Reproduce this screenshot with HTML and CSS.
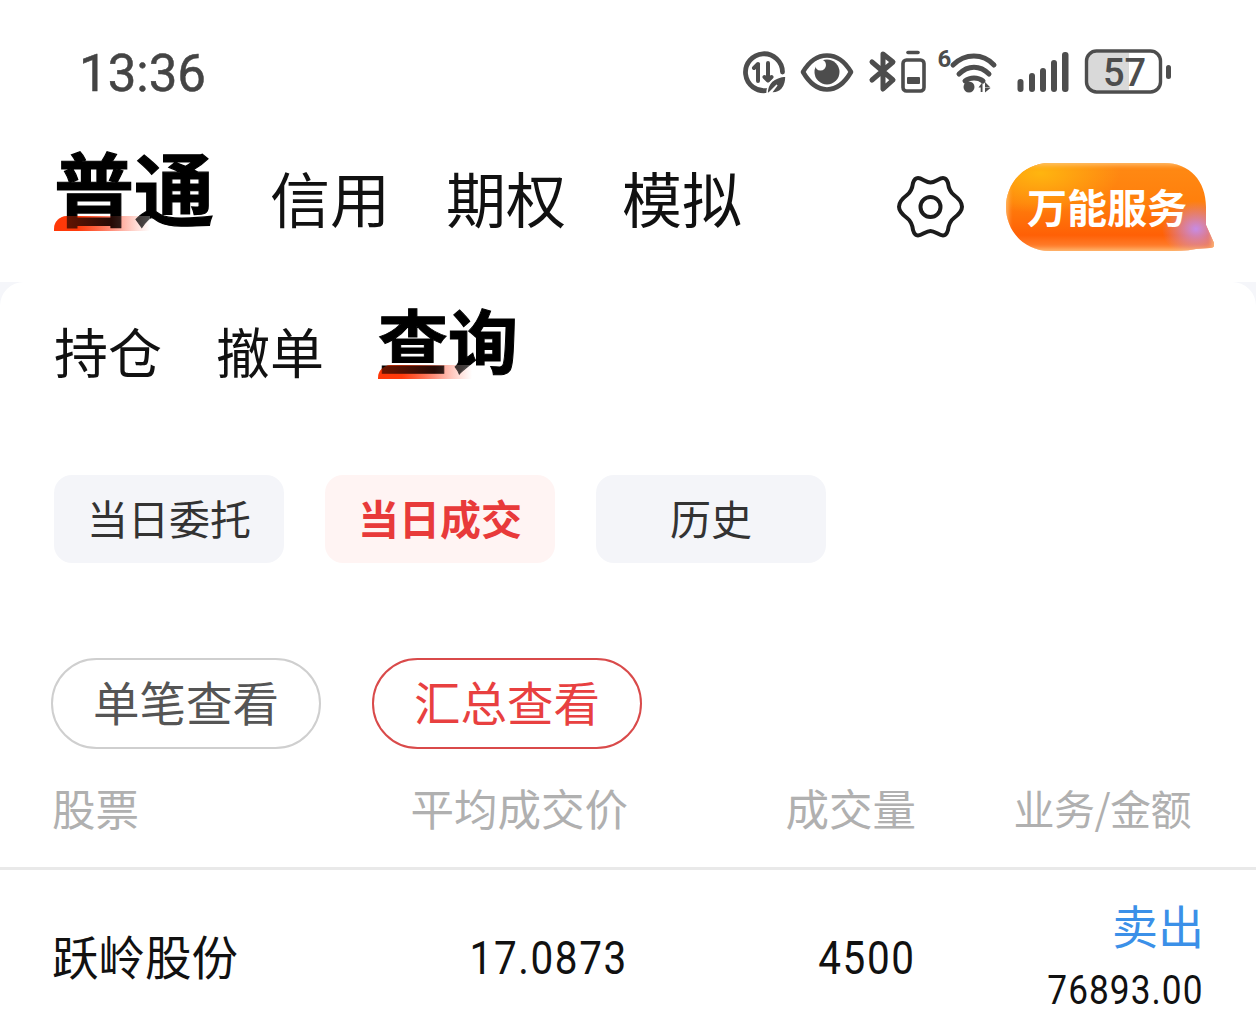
FILE: index.html
```html
<!DOCTYPE html>
<html lang="zh-CN">
<head>
<meta charset="utf-8">
<title>交易</title>
<link rel="stylesheet" href="styles.css">
</head>
<body>
<header class="top">
  <div class="status">
    <span class="time">13:36</span>
    <svg class="status-icons" viewBox="743 39 430 56" width="430" height="56">
      <g fill="none" stroke="#4d4d4d" stroke-width="4.800" stroke-linecap="round" stroke-linejoin="round">
        <path d="M768 90.500A18.500 18.500 0 1 1 783.500 72"/>
        <path d="M759 64v17M755 68l4-4M769 63v17.500M765.500 77l3.500 3.500 3.500-3.500" stroke-width="4"/>
        <path d="M804 72C811 60 819 55.500 828 55.500S845 60 852 72C845 84 837 89.500 828 89.500S811 84 804 72Z" stroke-width="4.600"/>
        <path d="M873 62L894 80L884 89V54L894 62L873 80" stroke-width="5"/>
        <rect x="904" y="60" width="21" height="31" rx="3.500" stroke-width="3.600"/>
        <path d="M909 52.500h10" stroke-width="3.600"/>
        <path d="M954 65C966 53 984 53 995 65M960 74C969 65 981 65 990 74M966 81C971 77 979 77 984 81" stroke-width="5"/>
      </g>
      <path d="M768 94c0-11 7-17 19-18 0 12-6 18-15 17l6-8-8 8z" fill="#4d4d4d" stroke="#fff" stroke-width="1.500"/>
      <g fill="#4d4d4d">
        <circle cx="828" cy="72" r="12.500"/>
        <rect x="908" y="77" width="13" height="7" rx="1"/>
        <circle cx="970" cy="87" r="5.500"/>
        <path d="M979.500 87.500l4-5.500v10h-1.800v-4.500zM986 82l5.500 5.500-5.500 0zM986 88h2.500l3 0-5.500 4.500z"/>
        <rect x="1018.500" y="79" width="6" height="13" rx="3"/>
        <rect x="1030" y="73" width="6" height="19" rx="3"/>
        <rect x="1041" y="68" width="6" height="24" rx="3"/>
        <rect x="1052" y="60" width="6" height="32" rx="3"/>
        <rect x="1063" y="52" width="6.500" height="40" rx="3"/>
        <rect x="1167" y="65" width="5" height="14" rx="2.500"/>
        <text class="mini" x="938.500" y="67">6</text>
      </g>
      <circle cx="821.500" cy="65" r="5.500" fill="#fff"/>
      <path d="M1092 53h38v37h-38a3 3 0 0 1-3-3V56a3 3 0 0 1 3-3z" fill="#d9d9d9"/>
      <rect x="1087.500" y="51" width="74" height="41" rx="10" fill="none" stroke="#4d4d4d" stroke-width="3.400"/>
      <text class="batt" x="1104" y="86">57</text>
    </svg>
  </div>
  <nav class="main-tabs">
    <a class="main-tab active">普通</a>
    <a class="main-tab">信用</a>
    <a class="main-tab">期权</a>
    <a class="main-tab">模拟</a>
    <svg class="gear" viewBox="0 0 70 64" width="70" height="64">
      <path d="M34.500 7.500C39 7.500 43 3 47 3C50 3 51 5 52 8C52.500 12 54 17 58 20C62 23 66 27 66 31.700C66 36 62 40 58 43C54 46 52.500 51 52 55C51 58.500 50 60.500 47 60.500C43 60.500 39 56 34.500 56C30 56 26 60.500 22 60.500C19 60.500 18 58.500 17 55C16.500 51 15 46 11 43C7 40 3 36 3 31.700C3 27 7 23 11 20C15 17 16.500 12 17 8C18 5 19 3 22 3C26 3 30 7.500 34.500 7.500Z" fill="none" stroke="#1c1c1c" stroke-width="4"/>
      <circle cx="34.500" cy="32" r="10" fill="none" stroke="#1c1c1c" stroke-width="4"/>
    </svg>
    <a class="service"><span>万能服务</span></a>
  </nav>
</header>
<main class="card">
  <nav class="sub-tabs">
    <a class="sub-tab">持仓</a>
    <a class="sub-tab">撤单</a>
    <a class="sub-tab active">查询</a>
  </nav>
  <div class="chips">
    <a class="chip">当日委托</a>
    <a class="chip active">当日成交</a>
    <a class="chip">历史</a>
  </div>
  <div class="pills">
    <a class="pill">单笔查看</a>
    <a class="pill active">汇总查看</a>
  </div>
  <div class="row head">
    <span class="col-name">股票</span>
    <span class="col-price">平均成交价</span>
    <span class="col-vol">成交量</span>
    <span class="col-amt">业务/金额</span>
  </div>
  <div class="row body-row">
    <span class="col-name">跃岭股份</span>
    <span class="col-price"><span class="num">17.0873</span></span>
    <span class="col-vol"><span class="num">4500</span></span>
    <span class="col-amt amount">
      <b>卖出</b>
      <i>76893.00</i>
    </span>
  </div>
</main>
</body>
</html>
```

FILE: styles.css
```css
* { box-sizing: border-box; }
html, body { margin: 0; height: 100%; }
body {
  width: 1256px;
  height: 1025px;
  overflow: hidden;
  background: #f5f6fa;
  font-family: "Noto Sans CJK SC", "Noto Sans", sans-serif;
  color: #111;
}
.top {
  height: 282px;
  background: #fff;
}
.status {
  height: 130px;
  padding: 47px 84px 0 79px;
  display: flex;
  justify-content: space-between;
  align-items: flex-start;
}
.time {
  font-family: Roboto, sans-serif;
  font-size: 51px;
  line-height: 54px;
  color: #444;
  -webkit-text-stroke: .5px #444;
}
.status-icons { margin-top: -8px; }
.mini { font: 700 24px Roboto, sans-serif; }
.batt { font: 500 38px Roboto, sans-serif; fill: #4d4d4d; }
.main-tabs {
  display: flex;
  align-items: flex-end;
  padding: 0 0 3px 56px;
  height: 110px;
  position: relative;
}
.main-tab {
  font-size: 60px;
  line-height: 80px;
  margin-right: 56px;
  color: #111;
  white-space: nowrap;
}
.main-tab.active {
  font-size: 80px;
  font-weight: 700;
  -webkit-text-stroke: 1.200px #000;
  line-height: 96px;
  margin: 0 56px 4px -2px;
  color: #000;
  position: relative;
  z-index: 0;
}
.main-tab.active::before, .sub-tab.active::before {
  content: "";
  position: absolute;
  z-index: -1;
  left: 0;
  bottom: 2px;
  width: 96px;
  height: 15px;
  border-radius: 13px 0 0 0;
  background: linear-gradient(90deg, #ff3d0d 0, #ff3d0d 25%, rgba(255, 90, 60, .6) 60%, rgba(255, 150, 130, 0) 100%);
}
.main-tab.active::after, .sub-tab.active::after {
  content: "";
  position: absolute;
  left: 0;
  bottom: 2px;
  width: 96px;
  height: 15px;
  border-radius: 13px 0 0 0;
  background: linear-gradient(90deg, rgba(255, 50, 0, .45), rgba(255, 70, 40, .15) 60%, rgba(255, 255, 255, .3));
}
.gear {
  position: absolute;
  left: 896px;
  top: 45px;
}
.service {
  position: absolute;
  left: 1006px;
  top: 33px;
  width: 208px;
  height: 88px;
  clip-path: path("M44 0H158C184 0 200 18 200 44V62L208 80C209 84 207 85 204 85L190 86C180 88 170 88 158 88H44C18 88 0 68 0 44S18 0 44 0Z");
  background:
    radial-gradient(34px 28px at 190px 66px, #c68ce6 0, rgba(198, 140, 230, 0) 100%),
    radial-gradient(80px 40px at 34px 10px, #ffb50f 0, rgba(255, 181, 15, 0) 100%),
    linear-gradient(180deg, #ff8a14 0, #ff7f0c 45%, #ff6006 82%, #ff8a3c 100%);
  box-shadow: inset 0 0 5px 2px rgba(255, 200, 130, .85);
  display: flex;
  align-items: center;
  justify-content: center;
}
.service span {
  color: #fff;
  font-size: 40px;
  font-weight: 700;
  line-height: 1;
  margin: -3px 0 0 -6px;
  white-space: nowrap;
}
.card {
  height: 743px;
  background: #fff;
  border-radius: 24px 24px 0 0;
}
.sub-tabs {
  height: 107px;
  padding: 0 0 5px 54px;
  display: flex;
  align-items: flex-end;
}
.sub-tab {
  font-size: 54px;
  line-height: 66px;
  margin-right: 54px;
  color: #111;
}
.sub-tab.active {
  font-size: 70px;
  font-weight: 700;
  -webkit-text-stroke: 1px #000;
  line-height: 84px;
  margin: 0 0 3px 0;
  color: #000;
  position: relative;
  z-index: 0;
}
.sub-tab.active::before, .sub-tab.active::after {
  width: 94px;
  height: 14px;
  left: 0;
  bottom: 2px;
}
.chips {
  display: flex;
  gap: 41px;
  padding: 86px 0 0 54px;
}
.chip {
  width: 230px;
  height: 88px;
  padding-bottom: 4px;
  border-radius: 18px;
  background: #f4f5f9;
  color: #333;
  font-size: 41px;
  display: flex;
  align-items: center;
  justify-content: center;
}
.chip.active {
  background: #fff4f3;
  color: #e83a3a;
  font-weight: 700;
}
.pills {
  display: flex;
  gap: 51px;
  padding: 95px 0 0 51px;
}
.pill {
  width: 270px;
  height: 91px;
  padding-bottom: 6px;
  border: 2px solid #cfcfcf;
  border-radius: 46px;
  color: #555;
  font-size: 46.500px;
  display: flex;
  align-items: center;
  justify-content: center;
}
.pill.active {
  border-color: #d94a4a;
  color: #e84040;
}
.row {
  display: grid;
  grid-template-columns: 270px 306px 288px 288px;
  padding: 0 52px;
  align-items: center;
}
.col-price, .col-vol, .col-amt { text-align: right; }
.head {
  height: 121px;
  padding-bottom: 2px;
  color: #b0b0b0;
  font-size: 43.500px;
  border-bottom: 3px solid #e9e9e9;
}
.head .col-amt {
  font-size: 41px;
  letter-spacing: -.5px;
  padding-right: 13px;
}
.body-row {
  height: 155px;
  padding-top: 14px;
}
.body-row .col-name { font-size: 46.500px; color: #111; }
.num {
  display: inline-block;
  padding-top: 6px;
  transform: scaleX(.88);
  transform-origin: right center;
  font-family: Roboto, sans-serif;
  font-size: 46px;
  line-height: 56px;
  letter-spacing: 1.800px;
  color: #111;
}
.amount {
  align-self: start;
  margin-top: 14px;
  display: flex;
  flex-direction: column;
  align-items: flex-end;
}
.amount b {
  font-weight: 400;
  font-size: 46px;
  line-height: 52px;
  color: #3b90e8;
}
.amount i {
  margin-top: 18px;
  transform: scaleX(.88);
  transform-origin: right center;
  font-style: normal;
  font-family: Roboto, sans-serif;
  font-size: 40px;
  line-height: 46px;
  letter-spacing: 1.200px;
  color: #111;
}
```
